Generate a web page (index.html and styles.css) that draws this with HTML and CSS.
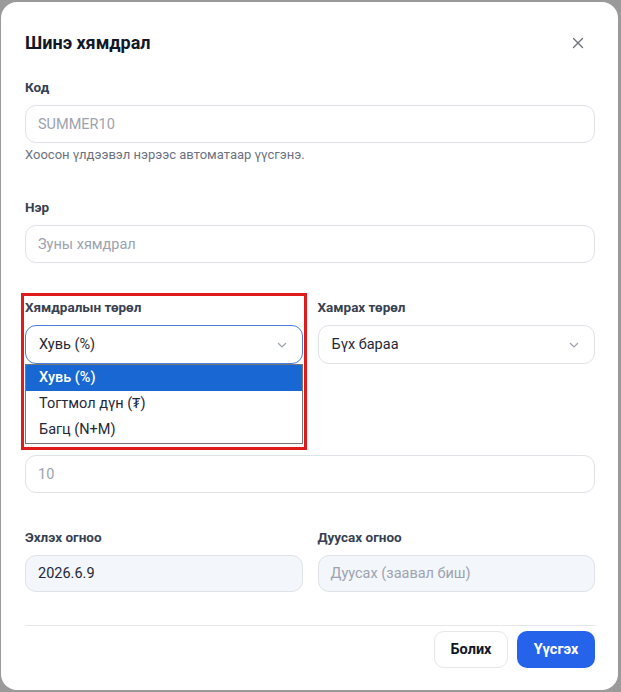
FILE: index.html
```html
<!DOCTYPE html>
<html lang="mn">
<head>
<meta charset="utf-8">
<title>Шинэ хямдрал</title>
<link rel="stylesheet" href="styles.css">
</head>
<body>
<div class="modal">
  <header class="head">
    <h2 class="title">Шинэ хямдрал</h2>
    <button class="close" aria-label="Хаах">
      <svg width="12" height="12" viewBox="0 0 12 12"><path d="M1.5 1.5l9 9M10.5 1.5l-9 9" stroke="#6b7280" stroke-width="1.4" stroke-linecap="round"/></svg>
    </button>
  </header>

  <div class="field">
    <label class="label">Код</label>
    <input class="input" placeholder="SUMMER10">
    <p class="hint">Хоосон үлдээвэл нэрээс автоматаар үүсгэнэ.</p>
  </div>

  <div class="field">
    <label class="label">Нэр</label>
    <input class="input" placeholder="Зуны хямдрал">
  </div>

  <div class="row row-types">
    <div class="field annotated">
      <label class="label">Хямдралын төрөл</label>
      <div class="select focused">
        <span>Хувь (%)</span>
        <svg class="chev" width="10" height="6" viewBox="0 0 10 6"><path d="M1 1l4 4 4-4" fill="none" stroke="#9ca3af" stroke-width="1.2"/></svg>
      </div>
      <ul class="dropdown">
        <li class="opt active">Хувь (%)</li>
        <li class="opt">Тогтмол дүн (₮)</li>
        <li class="opt">Багц (N+M)</li>
      </ul>
      <div class="redbox"></div>
    </div>
    <div class="field">
      <label class="label">Хамрах төрөл</label>
      <div class="select">
        <span>Бүх бараа</span>
        <svg class="chev" width="10" height="6" viewBox="0 0 10 6"><path d="M1 1l4 4 4-4" fill="none" stroke="#9ca3af" stroke-width="1.2"/></svg>
      </div>
    </div>
  </div>

  <div class="field">
    <label class="label covered" aria-label="Хувь"></label>
    <input class="input" placeholder="10">
  </div>

  <div class="row">
    <div class="field">
      <label class="label">Эхлэх огноо</label>
      <div class="input date">2026.6.9</div>
    </div>
    <div class="field">
      <label class="label">Дуусах огноо</label>
      <div class="input date ph">Дуусах (заавал биш)</div>
    </div>
  </div>

  <footer class="foot">
    <button class="btn ghost">Болих</button>
    <button class="btn primary">Үүсгэх</button>
  </footer>
</div>
</body>
</html>
```

FILE: styles.css
```css
* { box-sizing: border-box; }
html, body { margin: 0; height: 100%; }
body {
  background: #9a9a9a;
  font-family: Roboto, "Noto Sans", Arial, sans-serif;
  color: #1f2937;
  padding: 2px 3px 2px 1px;
}
.modal {
  background: #fff;
  border-radius: 16px;
  width: 617px;
  height: 688px;
  padding: 30px 23px 0 24px;
}
.head {
  display: flex;
  align-items: center;
  justify-content: space-between;
  height: 22px;
  margin-bottom: 25px;
}
.title {
  margin: 0;
  font-size: 18px;
  font-weight: 700;
  color: #111827;
  line-height: 22px;
}
.close {
  border: 0;
  background: none;
  padding: 0;
  width: 12px;
  height: 12px;
  margin-right: 11px;
  display: flex;
}
.field {
  display: flex;
  flex-direction: column;
  margin-bottom: 36px;
  position: relative;
}
.label {
  font-size: 13.5px;
  font-weight: 700;
  line-height: 16px;
  color: #374151;
  margin-bottom: 10px;
}
.label.covered { height: 16px; }
.input {
  height: 38px;
  border: 1px solid #dfe3e8;
  border-radius: 11px;
  padding: 0 12px;
  font-family: inherit;
  font-size: 14.5px;
  color: #1f2937;
  background: #fff;
  outline: none;
  width: 100%;
}
.input::placeholder { color: #9ca3af; }
.hint {
  margin: 4px 0 0;
  font-size: 13px;
  line-height: 16px;
  color: #6b7280;
}
.row {
  display: grid;
  grid-template-columns: 1fr 1fr;
  column-gap: 15px;
}
.row .field { margin-bottom: 36px; }
.row-types .field { margin-bottom: 65px; }
.select {
  height: 39px;
  border: 1px solid #dfe3e8;
  border-radius: 11px;
  padding: 0 12px 0 13px;
  display: flex;
  align-items: center;
  justify-content: space-between;
  font-size: 14.5px;
  color: #1f2937;
}
.select.focused { border-color: #4a7fe0; }
.chev { margin-right: 3px; }
.dropdown {
  position: absolute;
  left: 0;
  right: 0;
  top: 65px;
  margin: 0;
  padding: 0;
  list-style: none;
  background: #fff;
  border: 1px solid #767676;
  z-index: 2;
}
.opt {
  height: 26px;
  line-height: 26px;
  padding-left: 13px;
  font-size: 14.5px;
  color: #1f2937;
}
.opt.active {
  background: #1967d2;
  color: #fff;
  font-weight: 500;
}
.redbox {
  position: absolute;
  left: -4px;
  right: -4px;
  top: -6px;
  height: 157px;
  border: 3px solid #e01b1b;
  z-index: 3;
  pointer-events: none;
}
.input.date {
  height: 37px;
  background: #f3f6fa;
  display: flex;
  align-items: center;
  font-size: 14.5px;
}
.input.date.ph { color: #9ca3af; }
.foot {
  border-top: 1px solid #e5e7eb;
  margin-top: -3px;
  padding-top: 5px;
  display: flex;
  justify-content: flex-end;
  gap: 9px;
}
.btn {
  height: 37px;
  border-radius: 10px;
  font-family: inherit;
  font-size: 14.5px;
  font-weight: 700;
  padding: 0 12px;
}
.btn.ghost {
  background: #fff;
  border: 1px solid #e5e7eb;
  color: #111827;
  width: 74px;
}
.btn.primary {
  background: #2563eb;
  border: 0;
  color: #fff;
  width: 78px;
}
```
